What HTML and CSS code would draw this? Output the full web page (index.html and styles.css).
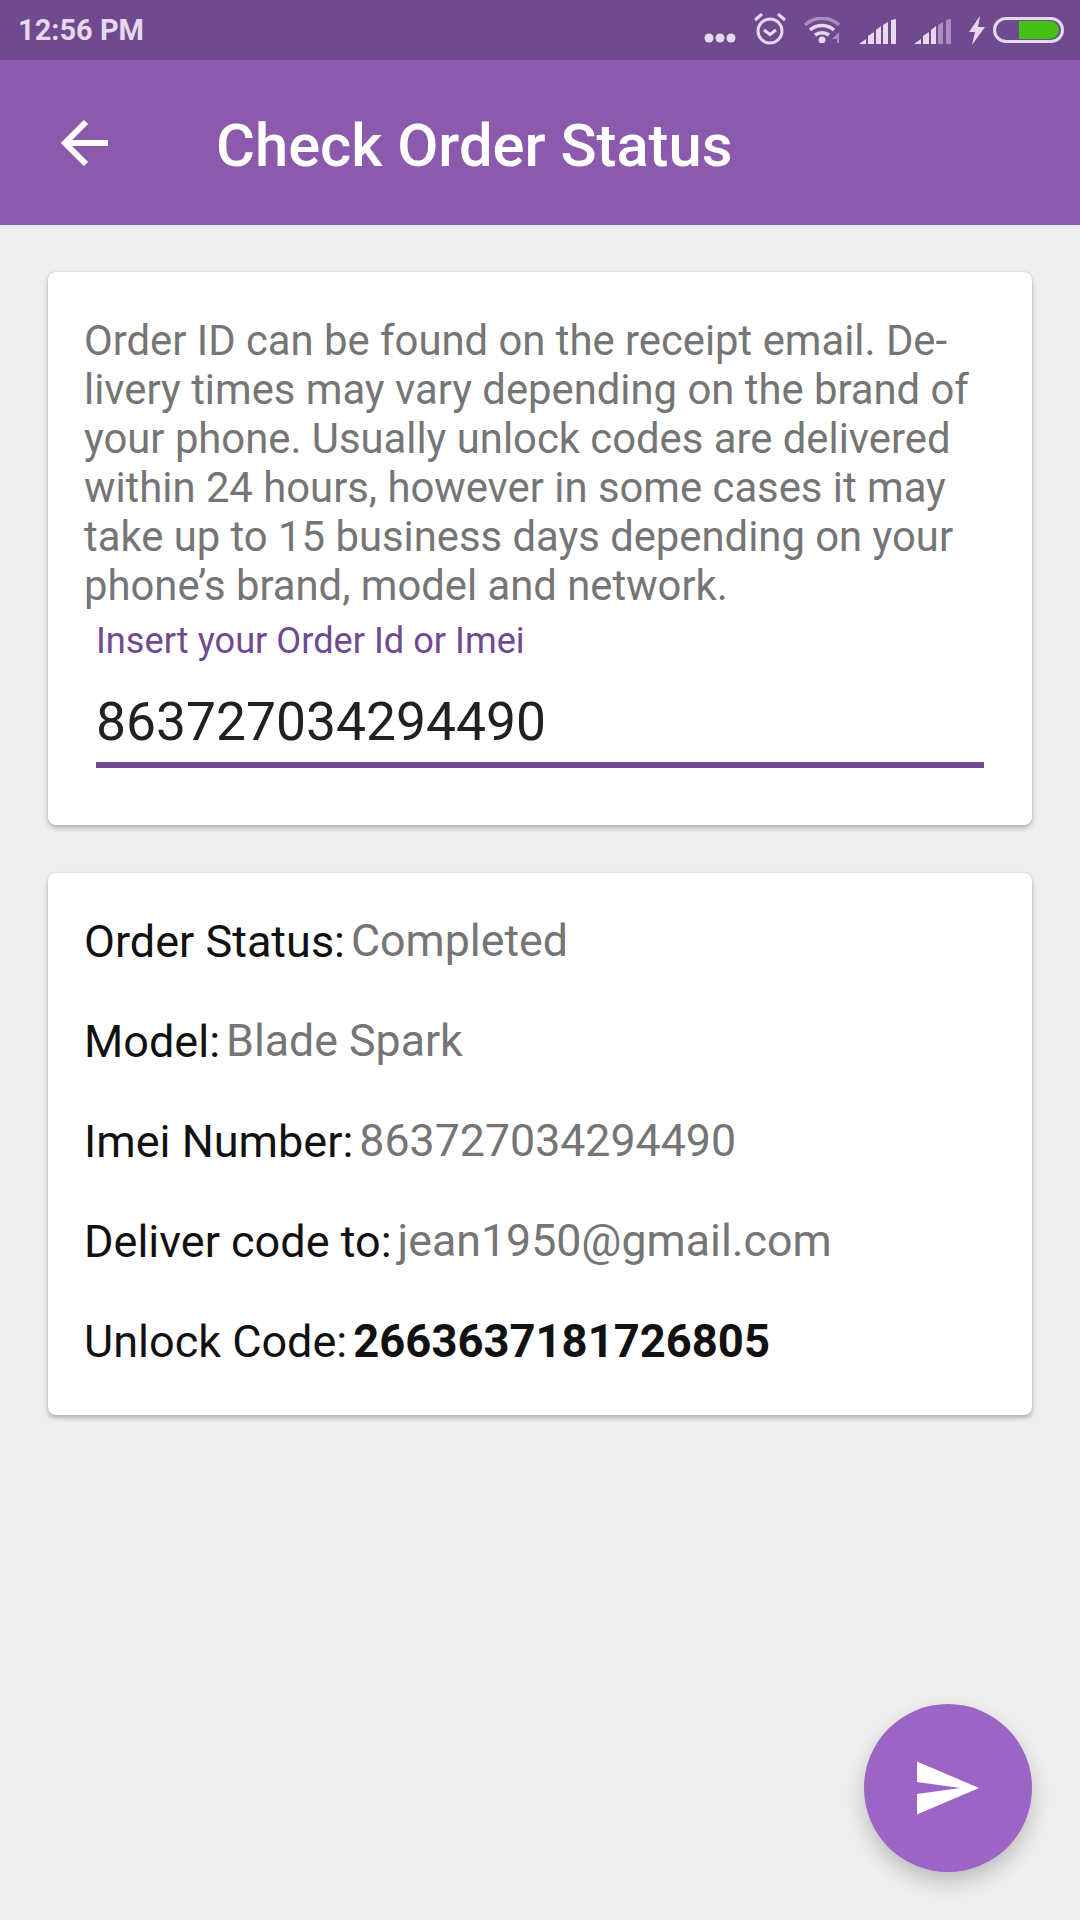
FILE: index.html
```html
<!DOCTYPE html>
<html lang="en">

<head>
  <meta charset="UTF-8">
  <meta name="viewport" content="width=device-width, initial-scale=1.0">
  <title>Check Order Status</title>
  <link rel="stylesheet" href="styles.css">
</head>

<body>
  <div class="screen">
    <div class="status-bar">
      <span class="clock">12:56 PM</span>
      <div class="status-icons">
        <svg class="ic-dots" width="32" height="12" viewBox="0 0 32 12"><circle cx="5" cy="6" r="4.500" /><circle cx="16" cy="6" r="4.500" /><circle cx="27" cy="6" r="4.500" /></svg>
        <svg class="ic-alarm" width="32" height="32" viewBox="0 0 32 32">
          <circle cx="16" cy="18" r="12" fill="none" stroke="#e6d9ee" stroke-width="3" />
          <path d="M10 17l6 4.500 6-4.500" fill="none" stroke="#e6d9ee" stroke-width="3" />
          <path d="M1 7l7-6M31 7l-7-6" fill="none" stroke="#e6d9ee" stroke-width="3" />
        </svg>
        <svg class="ic-wifi" width="37" height="26" viewBox="0 0 37 26">
          <path d="M1 8c10-9 24-9 34 0" fill="none" stroke="#a98cc0" stroke-width="3.500" />
          <path d="M6 13c7-6 17-6 24 0M11 18c4-3 10-3 14 0" fill="none" stroke="#e6d9ee" stroke-width="3.500" />
          <circle cx="18" cy="23" r="3.500" />
          <path d="M35 15v11h-2v-4l-5 0z" fill="#a98cc0" />
        </svg>
        <svg class="ic-signal" width="37" height="25" viewBox="0 0 37 25"><path d="M0 25l7-5v5zM9 25v-8l6-4v12zM17 25v-14l5-4v18zM24 25v-19l5-3v22zM32 25v-24l5-1v25z" /></svg>
        <svg class="ic-signal" width="37" height="25" viewBox="0 0 37 25"><path d="M0 25l7-5v5zM9 25v-8l6-4v12zM17 25v-14l5-4v18z" /><path d="M24 25v-19l5-3v22zM32 25v-24l5-1v25z" fill="#a98cc0" /></svg>
        <svg class="ic-bolt" width="16" height="29" viewBox="0 0 16 29"><path d="M11 0l-11 16h6l-3 13 13-18h-7z" /></svg>
        <div class="battery"><div class="battery-level"></div></div>
      </div>
    </div>

    <header class="app-bar">
      <svg class="back" width="48" height="48" viewBox="0 0 48 48"><path d="M5 24h43M26 3l-21 21 21 21" fill="none" stroke="#fff" stroke-width="6" /></svg>
      <h1>Check Order Status</h1>
    </header>

    <main class="content">
      <section class="card info-card">
        <p class="hint">Order ID can be found on the receipt email. De-<br>livery times may vary depending on the brand of<br>your phone. Usually unlock codes are delivered<br>within 24 hours, however in some cases it may<br>take up to 15 business days depending on your<br>phone’s brand, model and network.</p>
        <label class="field-label" for="orderId">Insert your Order Id or Imei</label>
        <input class="field" id="orderId" type="text" value="863727034294490">
      </section>

      <section class="card result-card">
        <div class="row"><span class="key">Order Status:</span><span class="val">Completed</span></div>
        <div class="row"><span class="key">Model:</span><span class="val">Blade Spark</span></div>
        <div class="row"><span class="key">Imei Number:</span><span class="val">863727034294490</span></div>
        <div class="row"><span class="key">Deliver code to:</span><span class="val">jean1950@gmail.com</span></div>
        <div class="row"><span class="key">Unlock Code:</span><span class="val code">2663637181726805</span></div>
      </section>
    </main>

    <button class="fab" type="button">
      <svg width="62" height="54" viewBox="0 0 63 54"><path d="M0 0l63 27-63 27v-21l44-6-44-6z" fill="#fff" /></svg>
    </button>
  </div>
</body>

</html>
```

FILE: styles.css
```css
* {
  box-sizing: border-box;
}

body {
  margin: 0;
  font-family: Roboto, sans-serif;
  background-color: #eeeeee;
}

.screen {
  position: relative;
  width: 1080px;
  height: 1920px;
  overflow: hidden;
}

.status-bar {
  display: flex;
  justify-content: space-between;
  align-items: center;
  height: 60px;
  padding: 0 16px 0 18px;
  background-color: #6f4a8e;
  color: #e6d9ee;
}

.clock {
  font-size: 29px;
  font-weight: 700;
}

.status-icons {
  display: flex;
  align-items: center;
  gap: 18px;
  fill: #e6d9ee;
}

.ic-dots {
  margin-top: 16px;
}

.ic-alarm {
  margin-bottom: 2px;
}

.ic-signal {
  margin-top: 2px;
}

.ic-bolt {
  margin-right: -10px;
}

.battery {
  display: flex;
  justify-content: flex-end;
  align-items: center;
  width: 71px;
  height: 26px;
  padding: 1px 2px;
  border: 3px solid #e6d9ee;
  border-radius: 13px;
}

.battery-level {
  width: 40px;
  height: 18px;
  background-color: #45c016;
  border-radius: 0 9px 9px 0;
}

.app-bar {
  display: flex;
  align-items: center;
  height: 165px;
  padding-left: 60px;
  background-color: #8b5aad;
}

.back {
  margin-right: 108px;
}

h1 {
  margin: 6px 0 0;
  font-size: 59.700px;
  font-weight: 500;
  color: #fff;
}

.content {
  padding: 47px 48px 0;
}

.card {
  background-color: #fff;
  border-radius: 8px;
  box-shadow: 0 3px 5px rgba(0, 0, 0, 0.25), 0 0 2px rgba(0, 0, 0, 0.12);
}

.info-card {
  height: 553px;
  padding: 44px 48px 0 36px;
}

.hint {
  margin: 0;
  font-size: 41.800px;
  line-height: 49px;
  color: #757575;
  white-space: nowrap;
}

.field-label {
  display: block;
  margin-top: 7px;
  margin-left: 12px;
  font-size: 36.200px;
  line-height: 48px;
  color: #6f4a8e;
}

.field {
  display: block;
  width: 888px;
  height: 87px;
  padding: 0;
  margin-left: 12px;
  margin-top: 16px;
  font-family: Roboto, sans-serif;
  font-size: 53.400px;
  color: #212121;
  border: none;
  border-bottom: 6px solid #6f4a8e;
  outline: none;
  background: none;
}

.result-card {
  display: flex;
  flex-direction: column;
  height: 542px;
  margin-top: 48px;
  padding: 18px 36px 0;
}

.row {
  display: flex;
  gap: 6px;
  align-items: center;
  height: 100px;
  font-size: 45px;
}

.key {
  color: #111;
}

.val {
  font-size: 44.700px;
  color: #757575;
}

.code {
  font-size: 45.400px;
  font-weight: 700;
  color: #111;
}

.fab {
  position: absolute;
  left: 864px;
  top: 1704px;
  display: flex;
  justify-content: center;
  align-items: center;
  width: 168px;
  height: 168px;
  padding: 0;
  background-color: #9c64c4;
  border: none;
  border-radius: 50%;
  box-shadow: 0 10px 20px rgba(0, 0, 0, 0.2);
}
```
